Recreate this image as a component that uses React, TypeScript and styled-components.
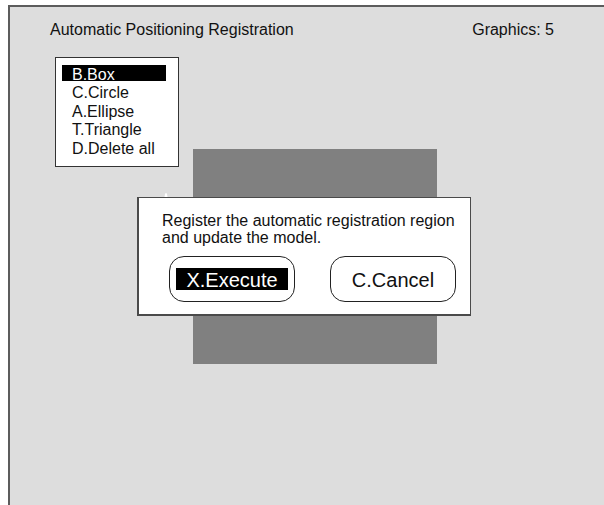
import React from 'react';
import styled, { createGlobalStyle } from 'styled-components';

const GlobalStyle = createGlobalStyle`
  html, body {
    margin: 0;
    padding: 0;
    background: #ffffff;
    overflow: hidden;
  }
  body {
    font-family: "Liberation Sans", Arial, sans-serif;
    color: #111111;
  }
`;

const Frame = styled.div`
  position: relative;
  margin: 5px 0 0 8px;
  width: 596px;
  height: 500px;
  box-sizing: border-box;
  border-top: 2px solid #5c5c5c;
  border-left: 2px solid #5c5c5c;
  background: #dddddd;
  overflow: hidden;
`;

const Header = styled.div`
  display: flex;
  justify-content: space-between;
  padding: 14px 50px 0 40px;
  font-size: 16px;
  line-height: 18px;
`;

const MenuBox = styled.div`
  margin: 18px 0 0 45px;
  width: 124px;
  height: 110px;
  box-sizing: border-box;
  padding: 7px 12px 0 6px;
  background: #ffffff;
  border: 1px solid #333333;
  display: flex;
  flex-direction: column;
  gap: 2.6px;
`;

const MenuItem = styled.div<{ $active?: boolean }>`
  height: 16px;
  box-sizing: border-box;
  padding: 1.5px 0 0 10px;
  font-size: 16px;
  line-height: 16px;
  white-space: nowrap;
  background: ${p => (p.$active ? '#000000' : 'transparent')};
  color: ${p => (p.$active ? '#ffffff' : '#111111')};
`;

const Shape = styled.div`
  position: absolute;
  left: 183px;
  top: 142px;
  width: 244px;
  height: 215px;
  background: #808080;
`;

const Marker = styled.svg`
  position: absolute;
  left: 152px;
  top: 185px;
`;

const Dialog = styled.div`
  position: absolute;
  left: 127px;
  top: 190px;
  width: 334px;
  height: 119px;
  box-sizing: border-box;
  background: #ffffff;
  border: 1px solid #4a4a4a;
  border-left-width: 2px;
  border-bottom-width: 2px;
  padding: 14px 0 0 23px;
`;

const Message = styled.div`
  font-size: 16px;
  line-height: 17px;
`;

const ButtonRow = styled.div`
  display: flex;
  gap: 35px;
  margin: 10px 0 0 7px;
`;

const DialogButton = styled.div`
  width: 126px;
  height: 46px;
  box-sizing: border-box;
  border: 1px solid #222222;
  border-radius: 15px;
  padding: 11px 6px;
`;

const ButtonLabel = styled.div<{ $active?: boolean }>`
  height: 22px;
  box-sizing: border-box;
  padding-top: 2px;
  font-size: 20px;
  line-height: 21px;
  text-align: center;
  background: ${p => (p.$active ? '#000000' : 'transparent')};
  color: ${p => (p.$active ? '#ffffff' : '#111111')};
`;

const items = ['B.Box', 'C.Circle', 'A.Ellipse', 'T.Triangle', 'D.Delete all'];

export default function App() {
  return (
    <>
      <GlobalStyle />
      <Frame>
        <Header>
          <span>Automatic Positioning Registration</span>
          <span>Graphics: 5</span>
        </Header>
        <MenuBox>
          {items.map((item, i) => (
            <MenuItem key={item} $active={i === 0}>
              {item}
            </MenuItem>
          ))}
        </MenuBox>
        <Shape />
        <Marker width="8" height="8" viewBox="0 0 8 8">
          <path d="M2 8 L3 2 Q4 0 5 2 L6 8 Z" fill="#ffffff" />
        </Marker>
        <Dialog>
          <Message>
            Register the automatic registration region
            <br />
            and update the model.
          </Message>
          <ButtonRow>
            <DialogButton>
              <ButtonLabel $active>X.Execute</ButtonLabel>
            </DialogButton>
            <DialogButton>
              <ButtonLabel>C.Cancel</ButtonLabel>
            </DialogButton>
          </ButtonRow>
        </Dialog>
      </Frame>
    </>
  );
}
